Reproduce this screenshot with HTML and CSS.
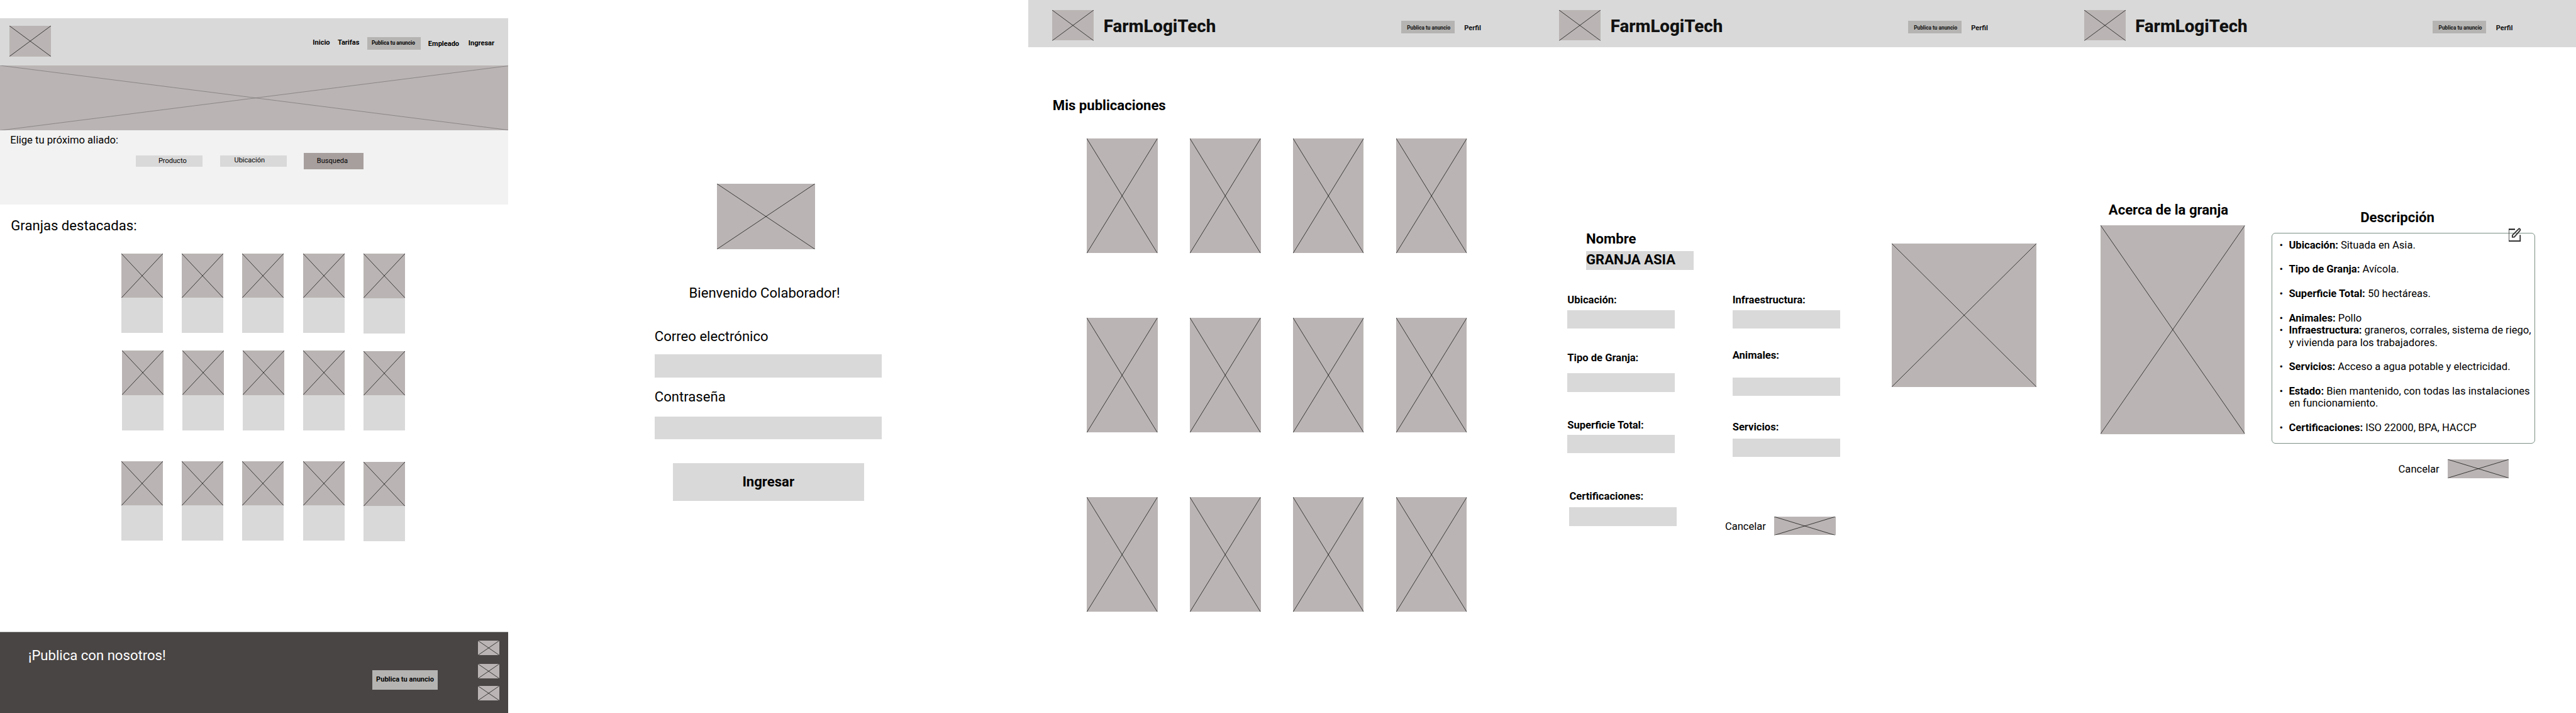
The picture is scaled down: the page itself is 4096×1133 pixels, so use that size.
FILE: index.html
```html
<!DOCTYPE html>
<html lang="es">
<head>
<meta charset="utf-8">
<title>FarmLogiTech</title>
<link rel="stylesheet" href="styles.css">
</head>
<body>
<svg class="defs" aria-hidden="true">
  <symbol id="x"><line x1="0" y1="0" x2="100%" y2="100%"/><line x1="100%" y1="0" x2="0" y2="100%"/></symbol>
</svg>

<section class="screen home">
  <header class="home-bar">
    <svg class="ph logo"><use href="#x"/></svg>
    <nav class="home-nav">
      <a class="n-inicio">Inicio</a>
      <a class="n-tarifas">Tarifas</a>
      <a class="chip">Publica tu anuncio</a>
      <a class="n-empleado">Empleado</a>
      <a class="n-ingresar">Ingresar</a>
    </nav>
  </header>
  <svg class="ph hero"><use href="#x"/></svg>
  <div class="search">
    <p class="search-title">Elige tu próximo aliado:</p>
    <div class="filters">
      <div class="filter f-prod">Producto</div>
      <div class="filter f-ubic">Ubicación</div>
      <div class="filter-btn">Busqueda</div>
    </div>
  </div>
  <h2 class="home-title">Granjas destacadas:</h2>
  <div class="cards">
    <div class="card"><svg class="ph"><use href="#x"/></svg></div>
    <div class="card"><svg class="ph"><use href="#x"/></svg></div>
    <div class="card"><svg class="ph"><use href="#x"/></svg></div>
    <div class="card"><svg class="ph"><use href="#x"/></svg></div>
    <div class="card"><svg class="ph"><use href="#x"/></svg></div>
  </div>
  <div class="cards cards-2">
    <div class="card"><svg class="ph"><use href="#x"/></svg></div>
    <div class="card"><svg class="ph"><use href="#x"/></svg></div>
    <div class="card"><svg class="ph"><use href="#x"/></svg></div>
    <div class="card"><svg class="ph"><use href="#x"/></svg></div>
    <div class="card"><svg class="ph"><use href="#x"/></svg></div>
  </div>
  <div class="cards cards-3">
    <div class="card"><svg class="ph"><use href="#x"/></svg></div>
    <div class="card"><svg class="ph"><use href="#x"/></svg></div>
    <div class="card"><svg class="ph"><use href="#x"/></svg></div>
    <div class="card"><svg class="ph"><use href="#x"/></svg></div>
    <div class="card"><svg class="ph"><use href="#x"/></svg></div>
  </div>
  <div class="rule"></div>
  <footer class="foot">
    <p class="foot-title">¡Publica con nosotros!</p>
    <a class="foot-btn">Publica tu anuncio</a>
    <div class="social">
      <svg class="ph"><use href="#x"/></svg>
      <svg class="ph"><use href="#x"/></svg>
      <svg class="ph"><use href="#x"/></svg>
    </div>
  </footer>
</section>

<section class="screen login">
  <svg class="ph login-img"><use href="#x"/></svg>
  <p class="welcome">Bienvenido Colaborador!</p>
  <form class="login-form">
    <label>Correo electrónico</label>
    <div class="login-input"></div>
    <label class="l-pass">Contraseña</label>
    <div class="login-input i-pass"></div>
    <div class="login-btn">Ingresar</div>
  </form>
</section>

<section class="screen posts">
  <header class="bar">
    <svg class="ph logo"><use href="#x"/></svg>
    <h1>FarmLogiTech</h1>
    <a class="chip">Publica tu anuncio</a>
    <a class="perfil">Perfil</a>
  </header>
  <h2 class="posts-title">Mis publicaciones</h2>
  <div class="posts-grid">
    <svg class="ph"><use href="#x"/></svg><svg class="ph"><use href="#x"/></svg><svg class="ph"><use href="#x"/></svg><svg class="ph"><use href="#x"/></svg>
    <svg class="ph"><use href="#x"/></svg><svg class="ph"><use href="#x"/></svg><svg class="ph"><use href="#x"/></svg><svg class="ph"><use href="#x"/></svg>
    <svg class="ph"><use href="#x"/></svg><svg class="ph"><use href="#x"/></svg><svg class="ph"><use href="#x"/></svg><svg class="ph"><use href="#x"/></svg>
  </div>
</section>

<section class="screen edit">
  <header class="bar">
    <svg class="ph logo"><use href="#x"/></svg>
    <h1>FarmLogiTech</h1>
    <a class="chip">Publica tu anuncio</a>
    <a class="perfil">Perfil</a>
  </header>
  <div class="edit-body">
    <div class="edit-form">
      <div class="name">
        <h2>Nombre</h2>
        <div class="name-box">GRANJA ASIA</div>
      </div>
      <div class="cols">
        <div class="col">
          <label>Ubicación:</label><div class="field"></div>
          <label class="l-tipo">Tipo de Granja:</label><div class="field f-tipo"></div>
          <label class="l-sup">Superficie Total:</label><div class="field f-sup"></div>
          <label class="l-cert">Certificaciones:</label><div class="field f-cert"></div>
        </div>
        <div class="col col-b">
          <label>Infraestructura:</label><div class="field"></div>
          <label class="l-ani">Animales:</label><div class="field f-ani"></div>
          <label class="l-ser">Servicios:</label><div class="field f-ser"></div>
          <div class="cancel"><span>Cancelar</span><svg class="ph"><use href="#x"/></svg></div>
        </div>
      </div>
    </div>
    <svg class="ph edit-img"><use href="#x"/></svg>
  </div>
</section>

<section class="screen about">
  <header class="bar">
    <svg class="ph logo"><use href="#x"/></svg>
    <h1>FarmLogiTech</h1>
    <a class="chip">Publica tu anuncio</a>
    <a class="perfil">Perfil</a>
  </header>
  <div class="about-body">
    <div class="about-left">
      <h2>Acerca de la granja</h2>
      <svg class="ph about-img"><use href="#x"/></svg>
    </div>
    <div class="about-right">
      <h2>Descripción</h2>
      <div class="desc">
        <svg class="pencil" viewBox="0 0 36 40"><path class="edge" d="M0.700 3V39"/><path d="M0 38.200H33V20.500"/><path class="top" d="M0 4.300H18"/><path d="M10.500 27V21.500L28 4Q31 0.500 33 4.500Q34 6.500 32 8.500L16 26.500Z"/></svg>
        <ul>
          <li class="sp"><b>Ubicación:</b> Situada en Asia.</li>
          <li class="sp"><b>Tipo de Granja:</b> Avícola.</li>
          <li class="sp"><b>Superficie Total:</b> 50 hectáreas.</li>
          <li><b>Animales:</b> Pollo</li>
          <li class="sp"><b>Infraestructura:</b> graneros, corrales, sistema de riego,<br>y vivienda para los trabajadores.</li>
          <li class="sp"><b>Servicios:</b> Acceso a agua potable y electricidad.</li>
          <li class="sp"><b>Estado:</b> Bien mantenido, con todas las instalaciones<br>en funcionamiento.</li>
          <li><b>Certificaciones:</b> ISO 22000, BPA, HACCP</li>
        </ul>
      </div>
      <div class="cancel"><span>Cancelar</span><svg class="ph"><use href="#x"/></svg></div>
    </div>
  </div>
</section>
</body>
</html>
```
FILE: styles.css
```css
* { box-sizing: border-box; margin: 0; padding: 0; }
body {
  width: 4096px; height: 1133px; overflow: hidden;
  display: flex; align-items: stretch;
  background: #fff; color: #000;
  font-family: Roboto, "Liberation Sans", sans-serif;
  font-size: 16.59px; line-height: 19px;
}
.defs { display: none; }
.screen { display: flex; flex-direction: column; flex: none; height: 1133px; }
.ph { display: block; flex: none; background: #bab5b4; stroke: #000; stroke-width: 0.7px; overflow: visible; }
.logo { width: 66px; height: 48.700px; }
h2 { font-size: 22.120px; line-height: 26px; font-weight: 700; }
.chip {
  width: 85.100px; height: 19.900px; background: #b5b4b2; flex: none;
  font-size: 8.300px; line-height: 10px; font-weight: 700; white-space: nowrap;
}

/* Home */
.home { width: 808px; }
.home-bar { margin-top: 28.800px; height: 75.300px; background: #d9d9d9; display: flex; padding: 12.200px 0 0 15.100px; }
.home-nav { display: flex; align-items: flex-start; margin-left: 416.200px; font-size: 11.060px; line-height: 13px; font-weight: 700; white-space: nowrap; }
.n-inicio { width: 39.600px; margin-top: 20px; }
.n-tarifas { width: 47.200px; margin-top: 20px; }
.home-nav .chip { margin-top: 18.200px; padding: 3.700px 0 0 6.900px; }
.n-empleado { width: 63.900px; margin: 22px 0 0 11.700px; }
.n-ingresar { margin-top: 21px; }
.hero { width: 813px; height: 103.300px; stroke: #777372; margin-right: -5px; clip-path: inset(0 5px 0 0); }
.search { height: 117.300px; background: #f2f2f2; }
.search-title { padding: 6px 0 0 16.300px; }
.filters { display: flex; margin-top: 11px; padding-left: 216.100px; font-size: 11.060px; line-height: 13px; }
.filter { height: 19.400px; width: 105.900px; margin-top: 3.900px; background: #d9d9d9; }
.filter { height: 17.700px; }
.f-prod { padding: 1.700px 0 0 35.800px; }
.f-ubic { padding: 1px 0 0 22.800px; margin-left: 27.700px; }
.filter-btn { width: 95px; height: 25.400px; background: #a79f9d; margin-left: 27.200px; padding: 6px 0 0 21.100px; }
.home-title { font-weight: 400; margin: 20.600px 0 0 17.300px; }
.cards { display: flex; gap: 30.150px; margin: 31.700px 0 0 193.100px; }
.cards-2 { margin: 28px 0 0 193.600px; }
.cards-3 { margin-top: 49.500px; }
.card { width: 66px; height: 126.300px; background: #d9d9d9; }
.card:last-child { margin: 0.500px 0 -0.500px; }
.card .ph { width: 66px; height: 70.400px; }
.rule { height: 1px; background: #808080; margin-top: 144.300px; }
.foot { flex: 1; background: #494544; display: flex; align-items: flex-start; }
.foot-title { color: #fff; font-size: 22.120px; line-height: 26px; width: 591.900px; padding: 23px 0 0 45px; }
.foot-btn { width: 103.900px; height: 31px; margin-top: 60.600px; background: #b5b4b2; padding: 8px 0 0 6.200px; font-size: 11.060px; line-height: 13px; font-weight: 700; white-space: nowrap; }
.social { display: flex; flex-direction: column; margin: 13.600px 0 0 64.700px; }
.social .ph { width: 33.900px; height: 23.200px; margin-bottom: 13.800px; }
.social .ph:nth-child(2) { margin-bottom: 11.300px; }

/* Login */
.login { width: 826.800px; font-size: 22.120px; line-height: 26px; }
.login-img { width: 155.800px; height: 104px; margin: 291.900px 0 0 331.800px; }
.welcome { margin: 56px 0 0 287.500px; }
.login-form { margin: 43.500px 0 0 232.800px; width: 361.200px; display: flex; flex-direction: column; }
.login-input { height: 36.500px; background: #d9d9d9; margin-top: 16.100px; }
.l-pass { margin-top: 17px; }
.i-pass { margin-top: 18.700px; }
.login-btn { margin: 37.700px 0 0 28.800px; width: 304.200px; height: 60.300px; background: #d9d9d9; font-weight: 700; text-align: center; padding-top: 16.300px; }

/* Shared top bar */
.bar { flex: none; height: 75.300px; background: #d9d9d9; color: #111; display: flex; align-items: flex-start; padding-left: 38.600px; }
.bar .logo { margin-top: 15.500px; }
.bar h1 { font-size: 27.650px; line-height: 33px; font-weight: 800; width: 473px; margin: 25px 0 0 15.400px; }
.bar .chip { margin-top: 33.200px; padding: 6px 0 0 9.400px; }
.perfil { font-size: 11.060px; line-height: 13px; font-weight: 700; margin: 37.700px 0 0 15.400px; }

/* Publications */
.posts { width: 806px; }
.posts-title { margin: 78.700px 0 0 39px; }
.posts-grid { display: grid; grid-template-columns: repeat(4, 112.400px); gap: 102.300px 51.400px; margin: 40px 0 0 93.600px; }
.posts-grid .ph { width: 112.400px; height: 182.500px; }

/* Edit farm */
.edit { width: 834.400px; }
.edit-body { display: flex; }
.edit-form { width: 567.300px; padding-top: 291px; }
.name { padding-left: 81.200px; }
.name-box { margin-top: 7.100px; width: 170.800px; height: 29.200px; background: #d9d9d9; font-size: 22.120px; line-height: 26px; font-weight: 700; }
.cols { display: flex; padding: 38.100px 0 0 51.500px; align-items: flex-start; }
.col { display: flex; flex-direction: column; width: 170.900px; font-weight: 700; white-space: nowrap; }
.col-b { margin-left: 91.500px; }
.field { height: 29.200px; background: #d9d9d9; margin-top: 7.200px; width: 170.900px; }
.l-tipo { margin-top: 37.400px; }
.f-tipo { margin-top: 15px; }
.l-sup { margin-top: 42.900px; }
.f-sup { margin-top: 6.100px; }
.l-cert { margin: 59.400px 0 0 3.200px; }
.f-cert { margin: 8.200px 0 0 3.200px; }
.l-ani { margin-top: 33px; }
.f-ani { margin-top: 25.800px; }
.l-ser { margin-top: 40.100px; }
.f-ser { margin-top: 8.500px; }
.cancel { display: flex; align-items: flex-start; font-weight: 400; }
.cancel span { width: 78.500px; padding-top: 6px; }
.cancel .ph { width: 97.300px; height: 29.600px; }
.col-b .cancel { margin: 94.700px 0 0 -11.800px; }
.edit-img { width: 230.100px; height: 227.800px; margin-top: 312px; }

/* About farm */
.about { width: 820.800px; }
.about-body { display: flex; }
.about-left { width: 337.100px; padding: 245px 0 0 64.600px; }
.about-left h2 { padding-left: 13px; }
.about-img { width: 229.600px; height: 331.500px; margin-top: 11.900px; }
.about-right { padding-top: 256.700px; }
.about-right h2 { padding-left: 140.900px; }
.desc { position: relative; margin-top: 12px; width: 419px; height: 335.200px; border: 1px solid #7c9084; border-radius: 6px; padding: 8.700px 0 0 26.100px; }
.pencil { position: absolute; left: 375.900px; top: -8.700px; width: 20px; height: 22px; fill: none; stroke: #333; stroke-width: 3.400px; }
.pencil .top { stroke: #000; }
.pencil .edge { stroke-width: 1.500px; }
.desc ul { list-style: none; font-size: 16.590px; line-height: 19.360px; white-space: nowrap; }
.desc li { position: relative; }
.desc li::before { content: "•"; position: absolute; left: -15px; }
.desc .sp { margin-bottom: 19.360px; }
.about-right .cancel { margin: 24.900px 0 0 201.300px; }
```
